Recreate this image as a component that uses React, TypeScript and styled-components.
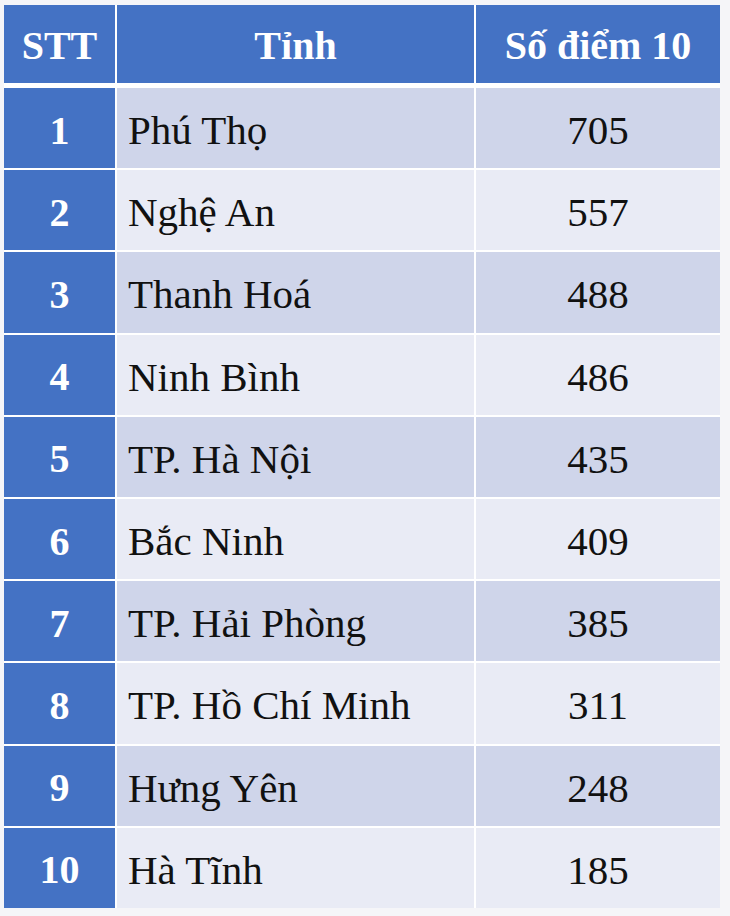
import { Fragment } from "react";
import styled, { createGlobalStyle } from "styled-components";

const GlobalStyle = createGlobalStyle`
  html, body {
    margin: 0;
    padding: 0;
    background: #f5f5f8;
  }
`;

const Page = styled.div`
  width: 730px;
  height: 916px;
  box-sizing: border-box;
  padding: 5px 10px 0 4px;
  font-family: "Liberation Serif", "Times New Roman", serif;
`;

const Table = styled.div`
  display: grid;
  grid-template-columns: 111px 357px 244px;
  grid-template-rows: 81px repeat(10, 80.2px);
  column-gap: 2px;
  row-gap: 2px;
  background: #ffffff;
`;

const HeadCell = styled.div`
  background: #4472c4;
  color: #ffffff;
  font-weight: bold;
  font-size: 40px;
  display: flex;
  align-items: center;
  justify-content: center;
  margin-bottom: 3px;
  padding-top: 2px;
`;

const IndexCell = styled.div`
  background: #4472c4;
  color: #ffffff;
  font-weight: bold;
  font-size: 40px;
  display: flex;
  align-items: center;
  justify-content: center;
  padding-top: 4px;
`;

const Cell = styled.div<{ $odd: boolean; $center?: boolean }>`
  background: ${(p) => (p.$odd ? "#cfd5ea" : "#e9ebf5")};
  color: #111111;
  font-size: 41px;
  display: flex;
  align-items: center;
  justify-content: ${(p) => (p.$center ? "center" : "flex-start")};
  padding-left: ${(p) => (p.$center ? "0" : "11px")};
  padding-top: 4px;
`;

const rows: [string, string][] = [
  ["Phú Thọ", "705"],
  ["Nghệ An", "557"],
  ["Thanh Hoá", "488"],
  ["Ninh Bình", "486"],
  ["TP. Hà Nội", "435"],
  ["Bắc Ninh", "409"],
  ["TP. Hải Phòng", "385"],
  ["TP. Hồ Chí Minh", "311"],
  ["Hưng Yên", "248"],
  ["Hà Tĩnh", "185"],
];

export default function App() {
  return (
    <>
      <GlobalStyle />
      <Page>
        <Table>
          <HeadCell>STT</HeadCell>
          <HeadCell>Tỉnh</HeadCell>
          <HeadCell>Số điểm 10</HeadCell>
          {rows.map(([name, score], i) => (
            <Fragment key={i}>
              <IndexCell>{i + 1}</IndexCell>
              <Cell $odd={i % 2 === 0}>{name}</Cell>
              <Cell $odd={i % 2 === 0} $center>
                {score}
              </Cell>
            </Fragment>
          ))}
        </Table>
      </Page>
    </>
  );
}
